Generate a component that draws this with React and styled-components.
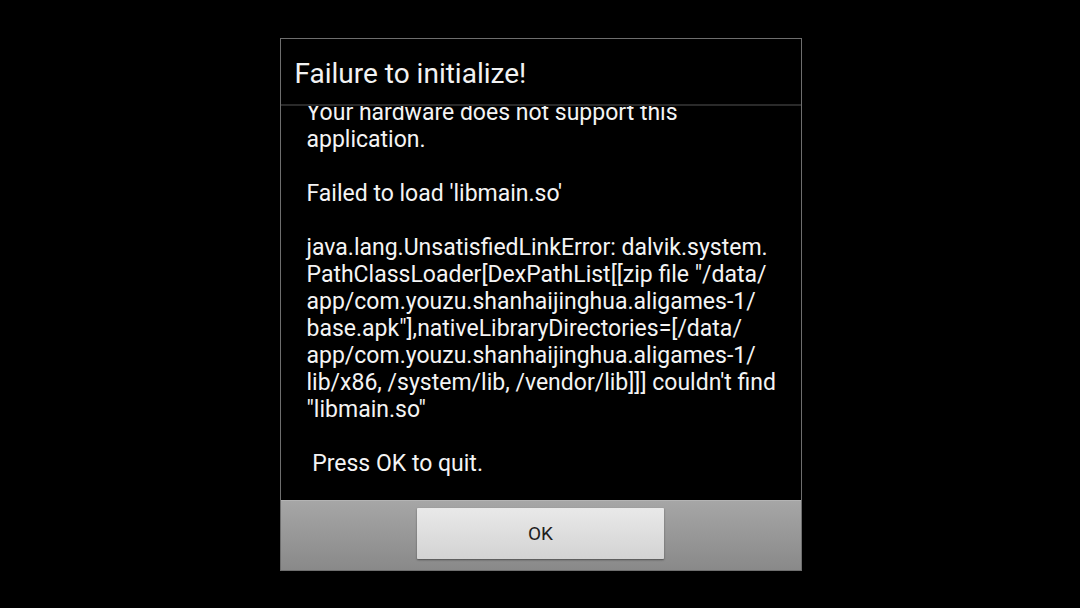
import React from "react";
import styled, { createGlobalStyle } from "styled-components";

const GlobalStyle = createGlobalStyle`
  html, body {
    margin: 0;
    padding: 0;
    background: #000;
  }
  body {
    font-family: Roboto, "Noto Sans", "Liberation Sans", sans-serif;
  }
`;

const Screen = styled.div`
  width: 1080px;
  height: 608px;
  display: flex;
  align-items: center;
  justify-content: center;
  background: #000;
`;

const Dialog = styled.div`
  width: 520px;
  height: 531px;
  border: 1px solid #6e6e6e;
  background: #000;
  display: flex;
  flex-direction: column;
  margin-left: 1px;
`;

const Title = styled.div`
  height: 67px;
  flex-shrink: 0;
  display: flex;
  align-items: center;
  padding: 5px 14px 0;
  color: #f2f2f2;
  font-size: 28px;
  border-bottom: 2px solid #2a2a2a;
  box-sizing: border-box;
`;

const Body = styled.div`
  flex: 1;
  overflow: hidden;
  padding: 0 26px;
`;

const Message = styled.div`
  margin-top: -7px;
  color: #f4f4f4;
  font-size: 23px;
  line-height: 27px;
`;

const Line = styled.div`
  white-space: pre;
  height: 27px;
`;

const ButtonBar = styled.div`
  height: 70px;
  flex-shrink: 0;
  display: flex;
  justify-content: center;
  padding-top: 7px;
  box-sizing: border-box;
  background: linear-gradient(#a6a6a6, #898989);
  border-top: 1px solid #b4b4b4;
`;

const Button = styled.button`
  width: 247px;
  height: 51px;
  border: none;
  border-radius: 1px;
  background: linear-gradient(#e9e9e9, #d3d3d3);
  box-shadow: 0 1px 2px rgba(0, 0, 0, 0.45);
  color: #1e1e1e;
  font-family: Roboto, "Noto Sans", "Liberation Sans", sans-serif;
  font-size: 19px;
  cursor: pointer;
`;

const lines = [
  "Your hardware does not support this",
  "application.",
  "",
  "Failed to load 'libmain.so'",
  "",
  "java.lang.UnsatisfiedLinkError: dalvik.system.",
  'PathClassLoader[DexPathList[[zip file "/data/',
  "app/com.youzu.shanhaijinghua.aligames-1/",
  'base.apk"],nativeLibraryDirectories=[/data/',
  "app/com.youzu.shanhaijinghua.aligames-1/",
  "lib/x86, /system/lib, /vendor/lib]]] couldn't find",
  '"libmain.so"',
  "",
  " Press OK to quit.",
];

const App = () => {
  return (
    <>
      <GlobalStyle />
      <Screen>
        <Dialog>
          <Title>Failure to initialize!</Title>
          <Body>
            <Message>
              {lines.map((line, index) => (
                <Line key={index}>{line}</Line>
              ))}
            </Message>
          </Body>
          <ButtonBar>
            <Button>OK</Button>
          </ButtonBar>
        </Dialog>
      </Screen>
    </>
  );
};

export default App;
